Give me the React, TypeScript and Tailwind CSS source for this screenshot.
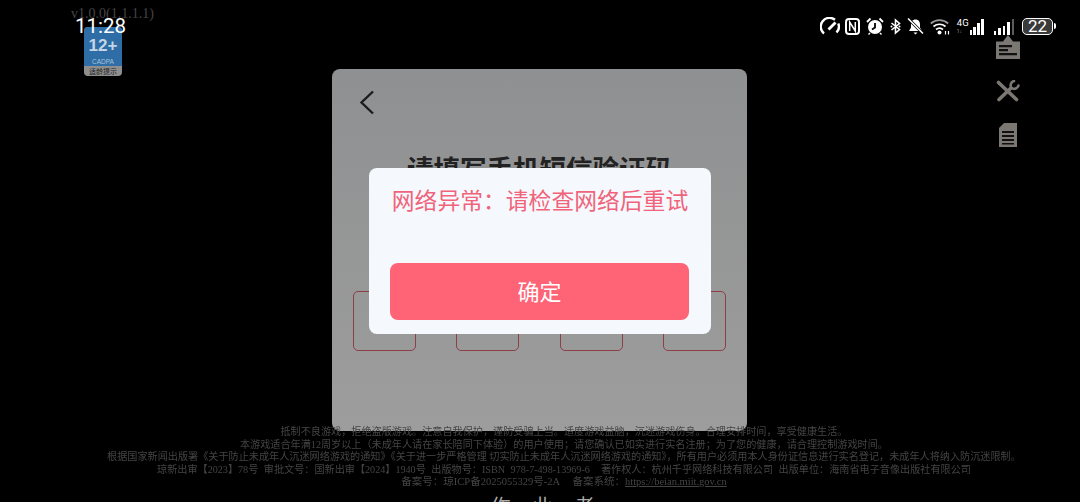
const serif = "font-['Liberation_Serif','Noto_Sans_CJK_SC',serif]";

function GaugeIcon() {
  return (
    <svg width="20" height="18" viewBox="0 0 20 18" fill="none" stroke="white" strokeWidth="2.400">
      <path d="M4 16.500A8.500 8.500 0 0 1 15 2.800" />
      <path d="M18.300 6.500A8.500 8.500 0 0 1 16.500 15.500" />
      <path d="M8.500 12.500L15.500 5.500" strokeWidth="2.800" />
    </svg>
  );
}

function NfcIcon() {
  return (
    <svg width="15" height="17" viewBox="0 0 15 17" fill="none" stroke="white">
      <rect x="1" y="1" width="13" height="15" rx="3" strokeWidth="2" />
      <path d="M4.700 13V4l5.600 9V4" strokeWidth="1.500" />
    </svg>
  );
}

function AlarmIcon() {
  return (
    <svg width="18" height="18" viewBox="0 0 18 18" fill="white">
      <circle cx="9" cy="10" r="7" />
      <path d="M9 6v4.500L6 12.500" stroke="black" strokeWidth="1.800" fill="none" />
      <path d="M1 5l3.500-3.500M17 5l-3.500-3.500" stroke="white" strokeWidth="1.800" />
      <path d="M4 16l-1.500 1.500M14 16l1.500 1.500" stroke="white" strokeWidth="1.400" />
    </svg>
  );
}

function BluetoothDots() {
  return (
    <svg width="11" height="17" viewBox="0 0 11 17" fill="none" stroke="white" strokeWidth="1.600">
      <path d="M1.500 5l8 6.500-4 3.500V2l4 3.500-8 6.500" />
      <circle cx="1.500" cy="8.500" r="1" fill="white" stroke="none" />
      <circle cx="9.500" cy="8.500" r="1" fill="white" stroke="none" />
    </svg>
  );
}

function MutedBell() {
  return (
    <svg width="17" height="17" viewBox="0 0 17 17" fill="white">
      <path d="M8.500 1.500c3 0 4.500 2.300 4.500 5v3l2 3.500H2l2-3.500v-3c0-2.700 1.500-5 4.500-5z" />
      <path d="M6.500 14.500h4l-2 2z" />
      <path d="M1.500 1L16 15.500" stroke="black" strokeWidth="3" />
      <path d="M1 .5L16 15.500" stroke="white" strokeWidth="1.500" />
    </svg>
  );
}

function WifiIcon() {
  return (
    <svg width="20" height="17" viewBox="0 0 20 17" fill="none" stroke="white" strokeWidth="1.700">
      <path d="M.8 5.500c5-4.500 12.400-4.500 17.400 0" stroke="#9a9a9a" />
      <path d="M3.500 8.500c3.500-3 8.500-3 12 0" />
      <path d="M6 11.500c2-1.500 5-1.500 7 0" />
      <circle cx="9.500" cy="14.500" r="2" fill="white" stroke="none" />
      <path d="M15.500 13v3.500M18.500 13v3.500" strokeWidth="1.200" />
    </svg>
  );
}

function SignalBars({ heights, gap, dim }: { heights: number[]; gap: string; dim?: boolean }) {
  return (
    <div className={`flex items-end h-[17px] ${gap}`}>
      {heights.map((h, i) => (
        <div
          key={i}
          className={dim && i === heights.length - 1 ? 'w-[2.500px] bg-[#5c5c5c]' : 'w-[2.500px] bg-white'}
          style={{ height: h }}
        />
      ))}
    </div>
  );
}

function StatusBar() {
  return (
    <div className="flex items-center justify-between h-[26px] mt-[13px] pl-[75px] pr-[24px]">
      <span className="text-[20.500px] leading-none text-white font-['Roboto',sans-serif]">11:28</span>
      <div className="flex items-center text-white">
        <GaugeIcon />
        <span className="w-[5px]" />
        <NfcIcon />
        <span className="w-[6px]" />
        <AlarmIcon />
        <span className="w-[6px]" />
        <BluetoothDots />
        <span className="w-[6px]" />
        <MutedBell />
        <span className="w-[6px]" />
        <WifiIcon />
        <span className="w-[7px]" />
        <div className="flex items-end h-[17px]">
          <div className="flex flex-col mr-[1px] h-[17px] font-['Roboto',sans-serif]">
            <span className="text-[9.500px] leading-[10px]">4G</span>
            <span className="text-[5px] leading-[6px] text-[#999]">1↓</span>
          </div>
          <SignalBars heights={[5, 8, 12, 16]} gap="gap-[1.300px]" />
        </div>
        <span className="w-[10px]" />
        <SignalBars heights={[4, 7, 9, 13, 16]} gap="gap-[2px]" dim />
        <span className="w-[8px]" />
        <div className="flex items-center">
          <div className="w-[31px] h-[17px] border border-white rounded-[5px] bg-[#3a3a3a] flex items-center justify-center text-[17px] leading-none font-['Roboto',sans-serif]">
            22
          </div>
          <div className="ml-[1px] w-[2px] h-[6px] bg-white rounded-r-sm" />
        </div>
      </div>
    </div>
  );
}

function AgeBadge() {
  return (
    <div className="absolute left-[84px] top-[27px] w-[38px] h-[49px] rounded-[4px] bg-[#8f8f8f] overflow-hidden flex flex-col">
      <div className="h-[39px] bg-[#2e6da6] flex flex-col items-center font-['Liberation_Sans',sans-serif]">
        <span className="mt-[10px] text-[17px] leading-none font-bold text-[#c4d6e6]">12+</span>
        <span className="mt-[5px] text-[6.500px] leading-none text-[#a9c3da]">CADPA</span>
      </div>
      <span className="text-[7px] leading-[10px] text-center text-[#222] font-['Noto_Sans_CJK_SC',sans-serif]">适龄提示</span>
    </div>
  );
}

function SideIcons() {
  return (
    <div className="absolute left-[996px] top-[35px] w-[24px] flex flex-col items-center gap-[21px]">
      <svg width="24" height="24" viewBox="0 0 24 24" fill="#7b7874">
        <path d="M12 0l5 6.500h7V24H0V6.500h7z" />
        <path d="M3 10h13v2.200H3zM3 14h9v2.200H3zM3 18h18v2.200H3z" fill="#111" />
      </svg>
      <svg width="24" height="22" viewBox="0 0 24 22" fill="none" stroke="#7b7874" strokeLinecap="round">
        <path d="M2.500 2.500L20.500 19.500" strokeWidth="3.600" />
        <path d="M15 8L3 19.500" strokeWidth="3.600" />
        <path d="M22.500 5.500a4.500 4.500 0 0 1-7 2.500 4.500 4.500 0 0 1 2.500-7" strokeWidth="2.600" />
      </svg>
      <svg width="18" height="24" viewBox="0 0 18 24" fill="#7b7874">
        <path d="M5 0h13v24H0V5z" />
        <path d="M3 8h12v2H3zM3 12h12v2H3zM3 16h12v2H3zM3 20h12v1.500H3z" fill="#111" />
      </svg>
    </div>
  );
}

function CodeBoxes() {
  return (
    <div className="flex justify-between px-[21px] mt-[106px]">
      {[0, 1, 2, 3].map((i) => (
        <div key={i} className="w-[63px] h-[60px] rounded-[5px] border-[1.500px] border-[#8d3f48]" />
      ))}
    </div>
  );
}

function LoginPanel() {
  return (
    <div className="absolute left-[332px] top-[69px] w-[415px] h-[362px] rounded-[8px] bg-gradient-to-b from-[#8f9091] to-[#9d9d9d]">
      <svg className="ml-[27px] mt-[21px]" width="16" height="25" viewBox="0 0 16 25" fill="none" stroke="#1c1c1c" strokeWidth="2.400">
        <path d="M14 1.500L2.500 12.500 14 23.500" />
      </svg>
      <h1 className="mt-[36px] text-center text-[26.500px] leading-[34px] font-bold text-[#222] font-['Noto_Sans_CJK_SC',sans-serif]">
        请填写手机短信验证码
      </h1>
      <CodeBoxes />
    </div>
  );
}

function AlertDialog() {
  return (
    <div className="absolute left-[369px] top-[168px] w-[342px] h-[166px] rounded-[8px] bg-[#f5f9fd] flex flex-col items-center">
      <p className="mt-[16px] text-[22.800px] leading-[32px] text-[#f0637a] font-['Noto_Sans_CJK_SC',sans-serif] whitespace-nowrap">
        网络异常：请检查网络后重试
      </p>
      <button className="mt-[47px] mr-[1px] w-[299px] h-[57px] rounded-[8px] bg-[#ff6376] text-white text-[22px] leading-[54px] pb-[3px] font-['Noto_Sans_CJK_SC',sans-serif]">
        确定
      </button>
    </div>
  );
}

function LegalFooter() {
  return (
    <div className={`absolute left-0 right-0 top-[426px] pl-[48px] text-center text-[10.150px] leading-[12.500px] text-[#444] whitespace-nowrap ${serif}`}>
      <p className="blur-[0.3px]">抵制不良游戏，拒绝盗版游戏。注意自我保护，谨防受骗上当。适度游戏益脑，沉迷游戏伤身。合理安排时间，享受健康生活。</p>
      <p className="blur-[0.3px]">本游戏适合年满12周岁以上（未成年人请在家长陪同下体验）的用户使用；请您确认已如实进行实名注册；为了您的健康，请合理控制游戏时间。</p>
      <p className="blur-[0.3px]">根据国家新闻出版署《关于防止未成年人沉迷网络游戏的通知》《关于进一步严格管理 切实防止未成年人沉迷网络游戏的通知》，所有用户必须用本人身份证信息进行实名登记，未成年人将纳入防沉迷限制。</p>
      <p className="blur-[0.3px] [word-spacing:3px]">琼新出审【2023】78号 审批文号：国新出审【2024】1940号 出版物号：ISBN 978-7-498-13969-6 &nbsp;著作权人：杭州千乎网络科技有限公司 出版单位：海南省电子音像出版社有限公司</p>
      <p className="blur-[0.3px] text-[10.500px]">
        备案号：琼ICP备2025055329号-2A &nbsp;&nbsp;&nbsp; 备案系统：<span className="underline">https://beian.miit.gov.cn</span>
      </p>
      <p className="mt-[6px] mr-[21px] text-[20px] leading-[24px] text-[#aaa] tracking-[22px]">作业者</p>
    </div>
  );
}

export default function App() {
  return (
    <div className="relative w-[1080px] h-[502px] overflow-hidden bg-black">
      <div className="absolute left-[71px] top-[6px] text-[14px] leading-[16px] text-[#444] font-['Liberation_Serif',serif]">
        v1.0.0(1.1.1.1)
      </div>
      <AgeBadge />
      <LoginPanel />
      <LegalFooter />
      <AlertDialog />
      <SideIcons />
      <div className="relative">
        <StatusBar />
      </div>
    </div>
  );
}
